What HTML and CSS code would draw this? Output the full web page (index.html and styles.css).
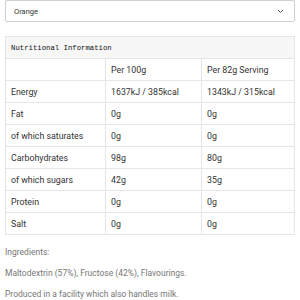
FILE: index.html
```html
<!DOCTYPE html>
<html>
<head>
<meta charset="utf-8">
<link rel="stylesheet" href="styles.css">
</head>
<body>
<div class="page">
  <div class="select">
    <span class="select-value">Orange</span>
    <svg class="chevron" width="7" height="5" viewBox="0 0 7 5"><path d="M1 1 L3.5 3.5 L6 1" fill="none" stroke="#555" stroke-width="1"/></svg>
  </div>
  <table class="nutrition">
    <colgroup>
      <col class="c1"><col class="c2"><col class="c3">
    </colgroup>
    <tr><th colspan="3" class="title">Nutritional Information</th></tr>
    <tr><td></td><td>Per 100g</td><td>Per 82g Serving</td></tr>
    <tr><td>Energy</td><td>1637kJ / 385kcal</td><td>1343kJ / 315kcal</td></tr>
    <tr><td>Fat</td><td>0g</td><td>0g</td></tr>
    <tr><td>of which saturates</td><td>0g</td><td>0g</td></tr>
    <tr><td>Carbohydrates</td><td>98g</td><td>80g</td></tr>
    <tr><td>of which sugars</td><td>42g</td><td>35g</td></tr>
    <tr><td>Protein</td><td>0g</td><td>0g</td></tr>
    <tr><td>Salt</td><td>0g</td><td>0g</td></tr>
  </table>
  <div class="ingredients">
    <p>Ingredients:</p>
    <p>Maltodextrin (57%), Fructose (42%), Flavourings.</p>
    <p>Produced in a facility which also handles milk.</p>
  </div>
</div>
</body>
</html>
```
FILE: styles.css
```css
html, body {
  margin: 0;
  padding: 0;
  background: #fff;
}
.page {
  padding: 0 5px;
  font-family: Roboto, "Liberation Sans", sans-serif;
}
.select {
  height: 22px;
  box-sizing: border-box;
  border: 1px solid #cfcfcf;
  border-radius: 2px;
  display: flex;
  align-items: center;
  justify-content: space-between;
  padding: 0 10px 0 8px;
}
.select-value {
  font-size: 7.5px;
  color: #333;
}
.chevron {
  display: block;
}
.nutrition {
  margin-top: 14px;
  width: 290px;
  border-collapse: collapse;
  table-layout: fixed;
  font-size: 8.8px;
  color: #333;
}
.c1 { width: 100px; }
.c2 { width: 96px; }
.nutrition th, .nutrition td {
  border: 1px solid #e6e6e6;
  height: 22px;
  padding: 0 0 0 5px;
  box-sizing: border-box;
  text-align: left;
  white-space: nowrap;
}
.nutrition .title {
  background: #f7f7f7;
  font-family: "Liberation Mono", monospace;
  font-weight: normal;
  font-size: 7.3px;
  color: #111;
}
.ingredients {
  margin-top: 7px;
  font-size: 8.5px;
  color: #777;
}
.ingredients p {
  margin: 0;
  line-height: 21px;
}
```
